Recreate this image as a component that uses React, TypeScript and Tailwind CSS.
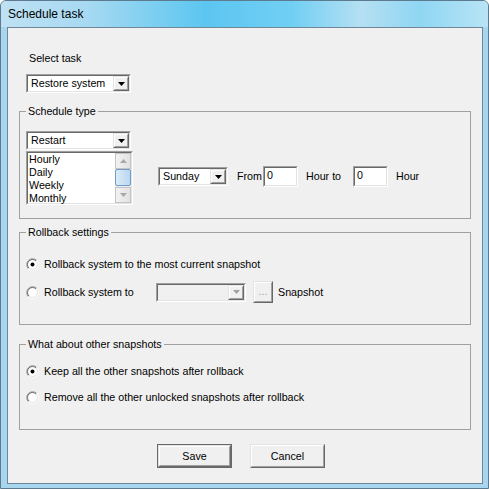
import React from "react";

const ui = "font-['Liberation_Sans',Arial,sans-serif] text-[10.7px] leading-[13px] text-black";

function Sunken({ className = "", inner = "bg-white", children }: { className?: string; inner?: string; children?: React.ReactNode }) {
  return (
    <div className={`border border-t-[#a0a0a0] border-l-[#a0a0a0] border-b-white border-r-white ${className}`}>
      <div className={`h-full border border-t-[#696969] border-l-[#696969] border-b-[#e3e3e3] border-r-[#e3e3e3] ${inner}`}>
        {children}
      </div>
    </div>
  );
}

function Raised({ className = "", children }: { className?: string; children?: React.ReactNode }) {
  return (
    <div className={`border border-t-[#e3e3e3] border-l-[#e3e3e3] border-b-[#696969] border-r-[#696969] ${className}`}>
      <div className="h-full border border-t-white border-l-white border-b-[#a0a0a0] border-r-[#a0a0a0] bg-[#f0f0f0] flex items-center justify-center">
        {children}
      </div>
    </div>
  );
}

function Arrow({ color = "#000", up = false }: { color?: string; up?: boolean }) {
  return (
    <svg width="7" height="4" viewBox="0 0 7 4">
      <path d={up ? "M0 4h7L3.5 0z" : "M0 0h7L3.5 4z"} fill={color} />
    </svg>
  );
}

function Combo({ value, className = "", disabled = false }: { value?: string; className?: string; disabled?: boolean }) {
  return (
    <Sunken className={className} inner={disabled ? "bg-[#f0f0f0]" : "bg-white"}>
      <div className="flex h-full items-center">
        <span className="flex-1 pl-[3px] whitespace-nowrap">{value}</span>
        <Raised className="w-[16px] h-full">
          <Arrow color={disabled ? "#a0a0a0" : "#000"} />
        </Raised>
      </div>
    </Sunken>
  );
}

function Radio({ checked = false }: { checked?: boolean }) {
  return (
    <svg width="13" height="13" viewBox="0 0 13 13" className="flex-none">
      <circle cx="6.5" cy="6.5" r="4.5" fill="#fff" />
      <path d="M2.26 10.74A6 6 0 0 1 10.74 2.26" fill="none" stroke="#a0a0a0" />
      <path d="M10.74 2.26A6 6 0 0 1 2.26 10.74" fill="none" stroke="#fff" />
      <path d="M2.96 10.04A5 5 0 0 1 10.04 2.96" fill="none" stroke="#696969" />
      <path d="M10.04 2.96A5 5 0 0 1 2.96 10.04" fill="none" stroke="#e3e3e3" />
      {checked && <circle cx="6.5" cy="6.5" r="2" fill="#000" />}
    </svg>
  );
}

function Group({ title, className = "", children }: { title: string; className?: string; children?: React.ReactNode }) {
  return (
    <fieldset className={`border border-[#a0a0a0] px-[6px] ${className}`}>
      <legend className="px-[2px]">{title}</legend>
      {children}
    </fieldset>
  );
}

function ScrollBtn({ up }: { up?: boolean }) {
  return (
    <div className="h-[16px] border border-[#c4c4c4] bg-[linear-gradient(90deg,#f2f2f2,#e2e2e2)] flex items-center justify-center">
      <Arrow color="#a8a8a8" up={up} />
    </div>
  );
}

export default function App() {
  return (
    <div className={`w-[489px] h-[489px] border border-[#5d7a8e] rounded-t-[6px] bg-[#a8d6ee] overflow-hidden ${ui}`}>
      <div className="h-[26px] pl-[7px] flex items-center bg-[linear-gradient(90deg,#bfe1f3_0%,#a6d9f2_18%,#5cc6f0_42%,#72cff4_60%,#b5e0f2_74%,#8fd6f3_86%,#b8e4f5_100%)]">
        <span className="font-['Liberation_Sans',Arial,sans-serif] text-[12px] text-black">Schedule task</span>
      </div>
      <div className="ml-[6px] w-[476px] h-[457px] border border-[#6f8798] bg-[#f0f0f0] px-[11px]">
        <div className="mt-[24px] ml-[10px]">Select task</div>
        <Combo value="Restore system" className="mt-[9px] ml-[7px] w-[105px] h-[19px]" />

        <Group title="Schedule type" className="mt-[12px] pt-[13px] pb-[13px]">
          <div className="flex">
            <div className="w-[107px] flex-none">
              <Combo value="Restart" className="w-[105px] h-[19px]" />
              <Sunken className="mt-[1px] w-[107px] h-[54px]">
                <div className="flex h-full">
                  <div className="flex-1 pl-[1px]">
                    <div>Hourly</div>
                    <div>Daily</div>
                    <div>Weekly</div>
                    <div>Monthly</div>
                  </div>
                  <div className="w-[16px] flex flex-col bg-[#ececec]">
                    <ScrollBtn up />
                    <div className="h-[17px] border border-[#6f9dc8] rounded-[2px] bg-[linear-gradient(90deg,#dcebf8,#b9d7f1)]" />
                    <div className="flex-1" />
                    <ScrollBtn />
                  </div>
                </div>
              </Sunken>
            </div>
            <div className="ml-[25px] mt-[35px] h-[21px] flex items-center">
              <Combo value="Sunday" className="w-[70px] h-[19px] flex-none" />
              <span className="ml-[9px] w-[26px]">From</span>
              <Sunken className="w-[35px] h-[21px]">
                <div className="pl-[2px] pt-[1px]">0</div>
              </Sunken>
              <span className="ml-[8px] w-[47px]">Hour to</span>
              <Sunken className="w-[35px] h-[21px]">
                <div className="pl-[2px] pt-[1px]">0</div>
              </Sunken>
              <span className="ml-[8px]">Hour</span>
            </div>
          </div>
        </Group>

        <Group title="Rollback settings" className="mt-[7px] pt-[15px] pb-[21px]">
          <div className="h-[20px] flex items-center">
            <Radio checked />
            <span className="ml-[5px]">Rollback system to the most current snapshot</span>
          </div>
          <div className="mt-[7px] h-[22px] flex items-center">
            <Radio />
            <span className="ml-[5px] w-[112px]">Rollback system to</span>
            <Combo disabled className="w-[90px] h-[19px]" />
            <Raised className="ml-[7px] w-[20px] h-[22px]">
              <span className="text-[#a0a0a0] leading-[8px] pb-[3px]">...</span>
            </Raised>
            <span className="ml-[5px]">Snapshot</span>
          </div>
        </Group>

        <Group title="What about other snapshots" className="mt-[13px] pt-[10px] pb-[22px]">
          <div className="h-[20px] flex items-center">
            <Radio checked />
            <span className="ml-[5px]">Keep all the other snapshots after rollback</span>
          </div>
          <div className="mt-[6px] h-[20px] flex items-center">
            <Radio />
            <span className="ml-[5px]">Remove all the other unlocked snapshots after rollback</span>
          </div>
        </Group>

        <div className="mt-[14px] flex">
          <div className="ml-[138px] w-[75px] h-[24px] border border-[#696969]">
            <Raised className="h-full">Save</Raised>
          </div>
          <Raised className="ml-[18px] w-[75px] h-[24px]">Cancel</Raised>
        </div>
      </div>
    </div>
  );
}
